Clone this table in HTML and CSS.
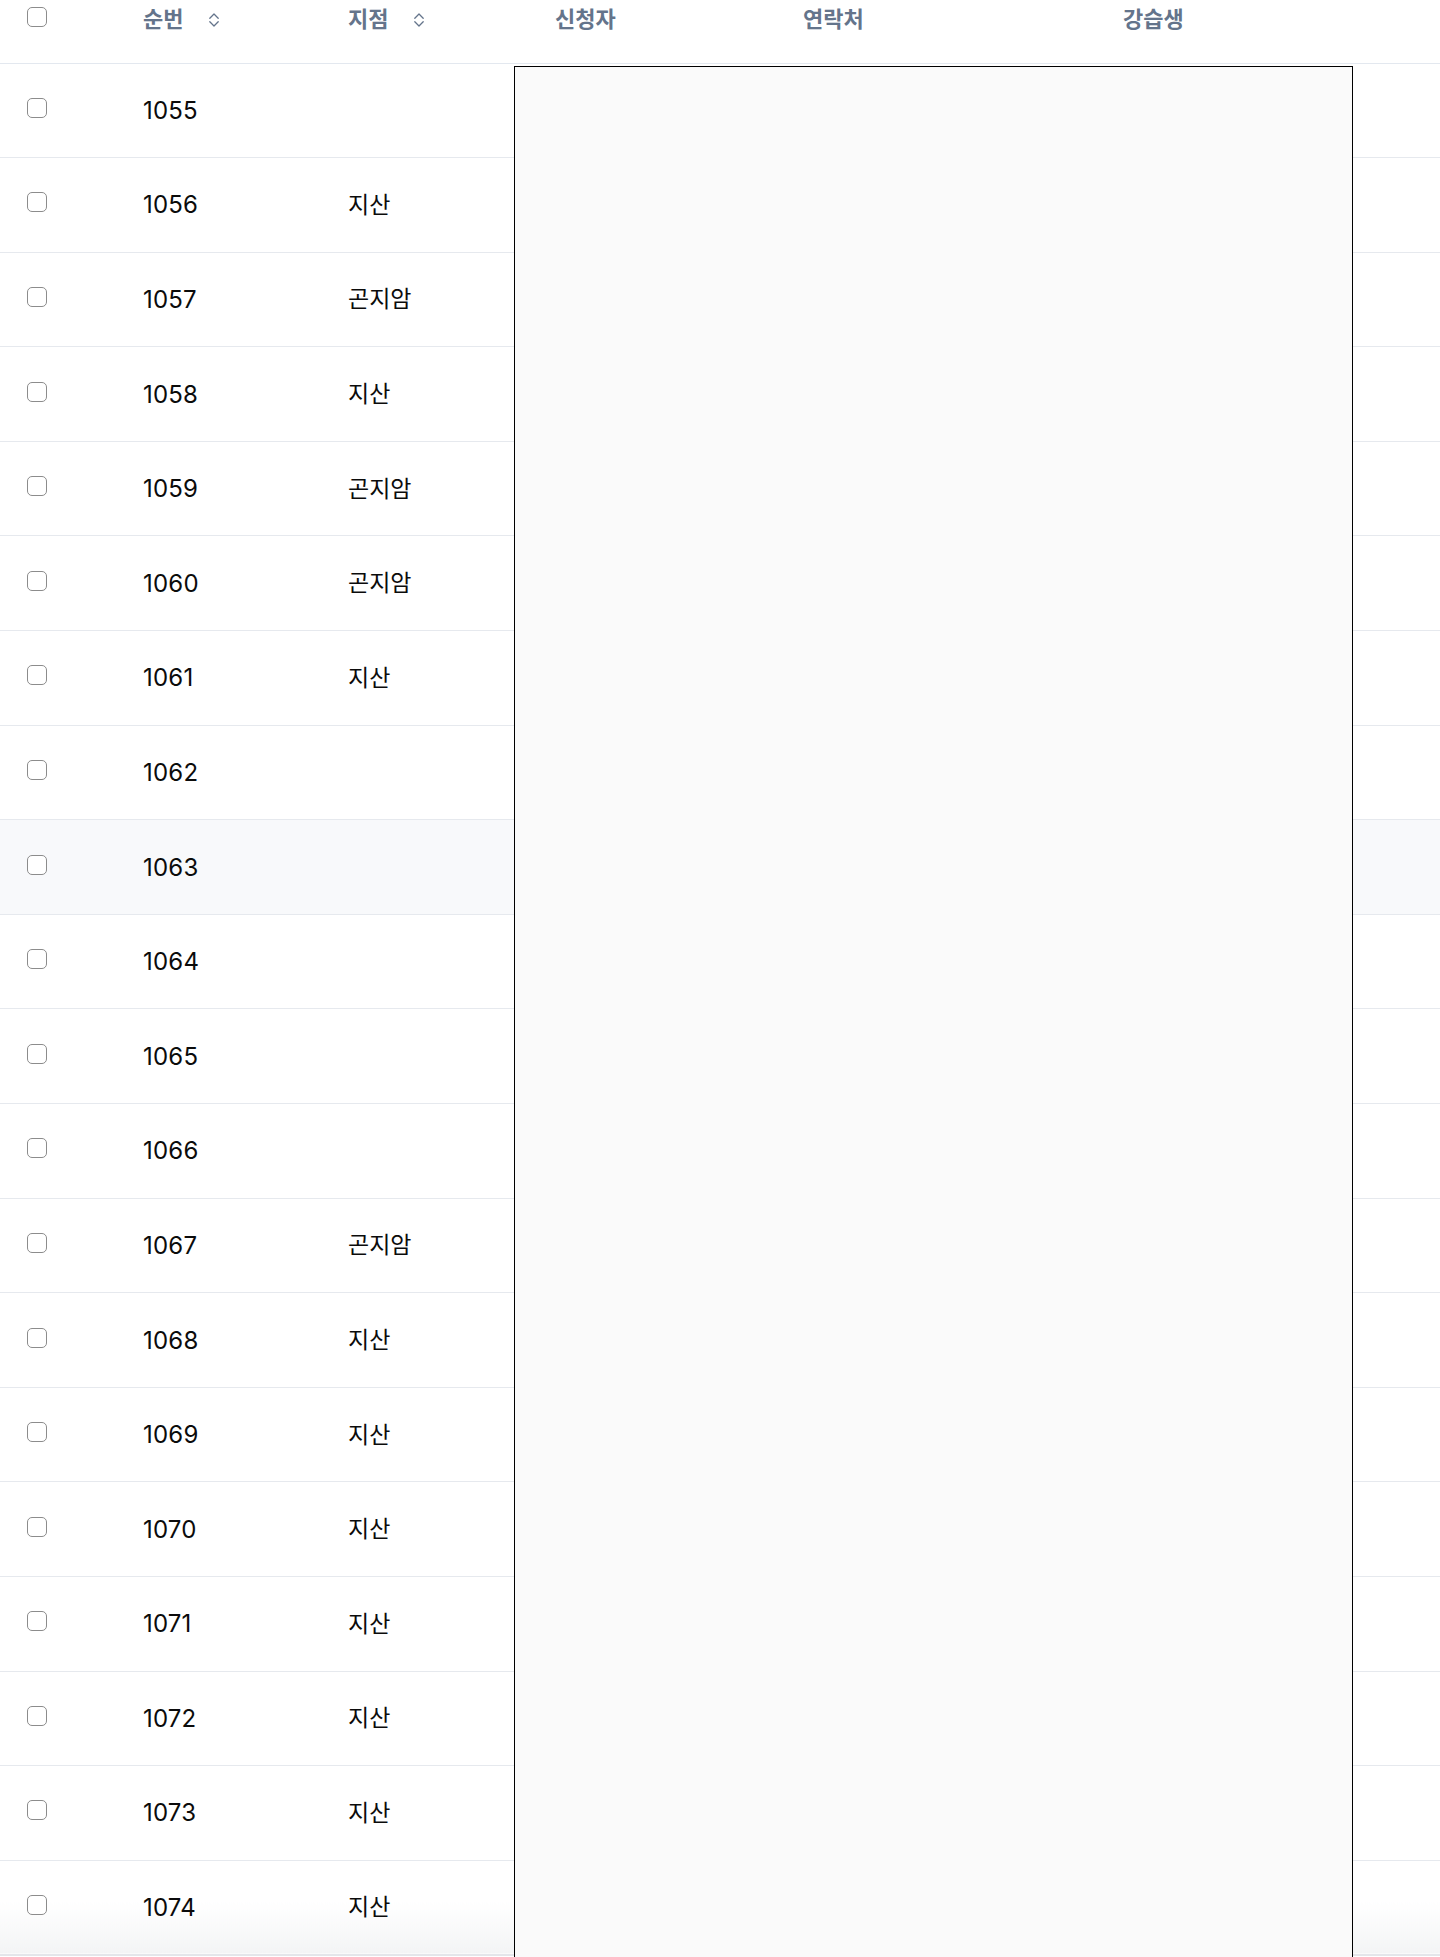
FILE: index.html
```html
<!DOCTYPE html>
<html lang="ko">
<head>
  <meta charset="UTF-8" />
  <meta name="viewport" content="width=device-width, initial-scale=1.0"/>
  <title>수강 신청 목록</title>
  <link rel="stylesheet" href="styles.css">
</head>
<body>

  <div class="page">
    <table class="list">
      <colgroup>
        <col class="c-check">
        <col class="c-no">
        <col class="c-branch">
        <col class="c-name">
        <col class="c-phone">
        <col class="c-student">
      </colgroup>
      <thead>
        <tr>
          <th class="check"><input type="checkbox"></th>
          <th>순번 <span class="sort"><svg width="12" height="16" viewBox="0 0 12 16"><path d="M1.8 6.2 6 2 10.2 6.2M1.8 9.8 6 14l4.2-4.2"/></svg></span></th>
          <th>지점 <span class="sort"><svg width="12" height="16" viewBox="0 0 12 16"><path d="M1.8 6.2 6 2 10.2 6.2M1.8 9.8 6 14l4.2-4.2"/></svg></span></th>
          <th>신청자</th>
          <th>연락처</th>
          <th>강습생</th>
          <th></th>
        </tr>
      </thead>
      <tbody>
        <tr><td class="check"><input type="checkbox"></td><td class="no">1055</td><td class="branch"></td><td></td><td></td><td></td><td></td></tr>
        <tr><td class="check"><input type="checkbox"></td><td class="no">1056</td><td class="branch">지산</td><td></td><td></td><td></td><td></td></tr>
        <tr><td class="check"><input type="checkbox"></td><td class="no">1057</td><td class="branch">곤지암</td><td></td><td></td><td></td><td></td></tr>
        <tr><td class="check"><input type="checkbox"></td><td class="no">1058</td><td class="branch">지산</td><td></td><td></td><td></td><td></td></tr>
        <tr><td class="check"><input type="checkbox"></td><td class="no">1059</td><td class="branch">곤지암</td><td></td><td></td><td></td><td></td></tr>
        <tr><td class="check"><input type="checkbox"></td><td class="no">1060</td><td class="branch">곤지암</td><td></td><td></td><td></td><td></td></tr>
        <tr><td class="check"><input type="checkbox"></td><td class="no">1061</td><td class="branch">지산</td><td></td><td></td><td></td><td></td></tr>
        <tr><td class="check"><input type="checkbox"></td><td class="no">1062</td><td class="branch"></td><td></td><td></td><td></td><td></td></tr>
        <tr class="hover"><td class="check"><input type="checkbox"></td><td class="no">1063</td><td class="branch"></td><td></td><td></td><td></td><td></td></tr>
        <tr><td class="check"><input type="checkbox"></td><td class="no">1064</td><td class="branch"></td><td></td><td></td><td></td><td></td></tr>
        <tr><td class="check"><input type="checkbox"></td><td class="no">1065</td><td class="branch"></td><td></td><td></td><td></td><td></td></tr>
        <tr><td class="check"><input type="checkbox"></td><td class="no">1066</td><td class="branch"></td><td></td><td></td><td></td><td></td></tr>
        <tr><td class="check"><input type="checkbox"></td><td class="no">1067</td><td class="branch">곤지암</td><td></td><td></td><td></td><td></td></tr>
        <tr><td class="check"><input type="checkbox"></td><td class="no">1068</td><td class="branch">지산</td><td></td><td></td><td></td><td></td></tr>
        <tr><td class="check"><input type="checkbox"></td><td class="no">1069</td><td class="branch">지산</td><td></td><td></td><td></td><td></td></tr>
        <tr><td class="check"><input type="checkbox"></td><td class="no">1070</td><td class="branch">지산</td><td></td><td></td><td></td><td></td></tr>
        <tr><td class="check"><input type="checkbox"></td><td class="no">1071</td><td class="branch">지산</td><td></td><td></td><td></td><td></td></tr>
        <tr><td class="check"><input type="checkbox"></td><td class="no">1072</td><td class="branch">지산</td><td></td><td></td><td></td><td></td></tr>
        <tr><td class="check"><input type="checkbox"></td><td class="no">1073</td><td class="branch">지산</td><td></td><td></td><td></td><td></td></tr>
        <tr><td class="check"><input type="checkbox"></td><td class="no">1074</td><td class="branch">지산</td><td></td><td></td><td></td><td></td></tr>
      </tbody>
    </table>

    <!-- detail panel covering the middle columns -->
    <div class="panel"></div>
  </div>

</body>
</html>
```

FILE: styles.css
```css
* {
  box-sizing: border-box;
}

html, body {
  margin: 0;
  height: 100%;
  overflow: hidden;
  background-color: white;
}

body {
  font-family: Inter, "Noto Sans CJK KR", sans-serif;
  font-size: 22px;
  color: #0b0b0b;
}

.page {
  position: relative;
}

.list {
  width: 100%;
  border-collapse: collapse;
  table-layout: fixed;
}

.c-check   { width: 127px; }
.c-no      { width: 205px; }
.c-branch  { width: 207px; }
.c-name    { width: 248px; }
.c-phone   { width: 320px; }
.c-student { width: 180px; }

th {
  height: 63px;
  padding: 5px 16px 0;
  text-align: left;
  vertical-align: top;
  font-weight: 600;
  line-height: 28px;
  color: #64748b;
  border-bottom: 1px solid #e3e8ef;
  white-space: nowrap;
}

th.check {
  padding-top: 7px;
  line-height: 20px;
}

.sort {
  display: inline-block;
  margin-left: 19px;
  vertical-align: -1px;
}

.sort svg {
  display: block;
  fill: none;
  stroke: #64748b;
  stroke-width: 1.3;
  stroke-linecap: round;
  stroke-linejoin: round;
}

td {
  height: 94.6px;
  padding: 0 16px;
  vertical-align: middle;
  border-bottom: 1px solid #e6e9ee;
  white-space: nowrap;
}

td.no {
  font-size: 24px;
  letter-spacing: 0.2px;
}

td.branch {
  font-size: 23px;
  padding-bottom: 4px;
}

.check {
  padding-left: 27px;
  padding-right: 0;
}

td.check input {
  margin-top: -5px;
}

input[type="checkbox"] {
  appearance: none;
  display: block;
  width: 20px;
  height: 20px;
  margin: 0;
  border: 1.5px solid #8c8c8c;
  border-radius: 5px;
  background-color: white;
}

tr.hover td {
  background-color: #f8f9fb;
}

tbody tr:last-child td {
  background: linear-gradient(#ffffff 45%, #f3f4f5);
  border-bottom: 2px solid #e4e6ea;
}

.panel {
  position: absolute;
  left: 514px;
  top: 66px;
  width: 839px;
  height: 1960px;
  border: 1px solid #000;
  background-color: #fafafa;
}
```
